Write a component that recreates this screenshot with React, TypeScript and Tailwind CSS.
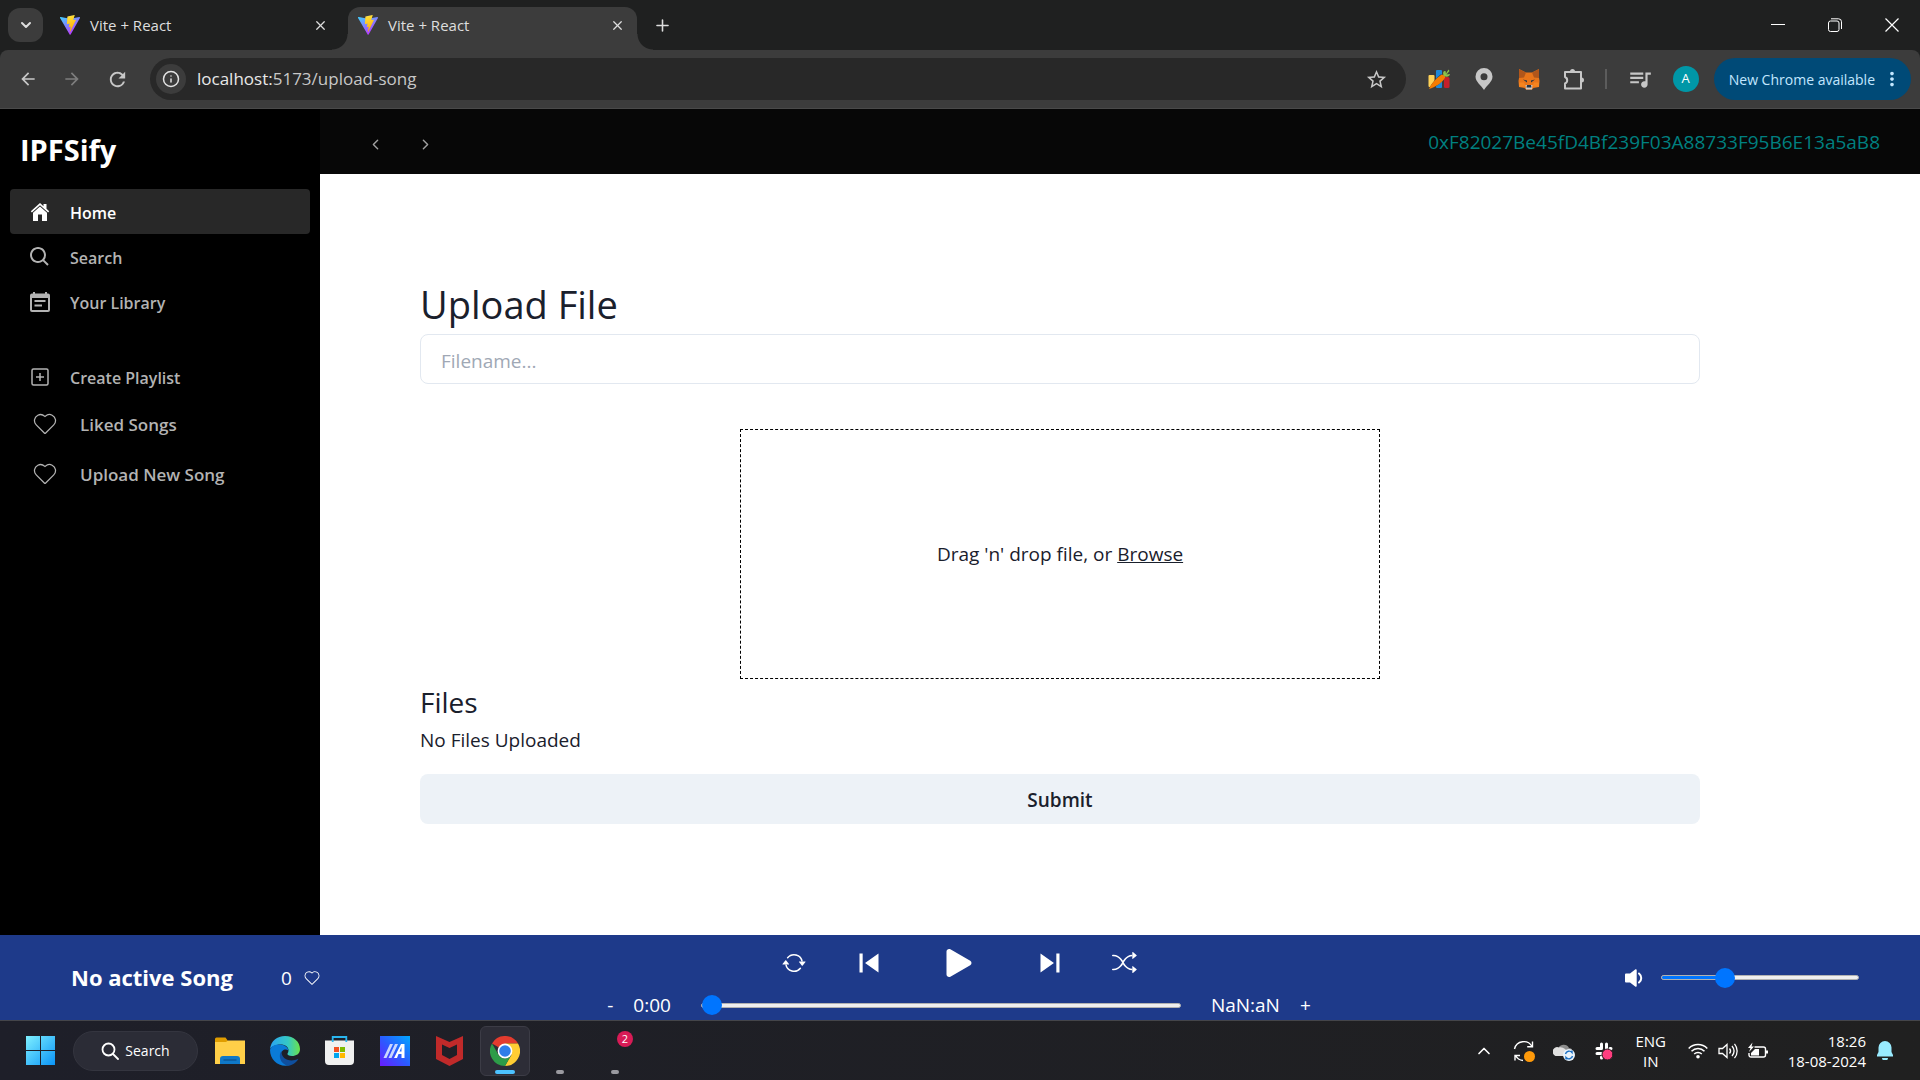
import React, { useState } from "react"
import { BiSearch } from "react-icons/bi"
import { CiHeart } from "react-icons/ci"
import { BsArrowRepeat, BsFillPlayFill, BsShuffle } from "react-icons/bs"
import {
  MdArrowBack,
  MdArrowForward,
  MdMoreVert,
  MdQueueMusic,
  MdRefresh,
  MdSkipNext,
  MdSkipPrevious,
  MdStarBorder,
} from "react-icons/md"
import { ChevronDown, ChevronLeft, ChevronRight, ChevronUp, Info, Plus, X } from "lucide-react"

function ViteLogo() {
  return (
    <svg viewBox="0 0 32 32" className="size-5 shrink-0">
      <defs>
        <linearGradient id="viteA" x1="0" x2="0.6" y1="0" y2="1">
          <stop offset="0" stopColor="#41d1ff" />
          <stop offset="1" stopColor="#bd34fe" />
        </linearGradient>
        <linearGradient id="viteB" x1="0.4" x2="0.6" y1="0" y2="1">
          <stop offset="0" stopColor="#ffea83" />
          <stop offset="0.1" stopColor="#ffdd35" />
          <stop offset="1" stopColor="#ffa800" />
        </linearGradient>
      </defs>
      <path fill="url(#viteA)" d="M31.9 4.6 17 31.3c-.4.6-1.2.6-1.6 0L.1 4.6c-.4-.7.2-1.5 1-1.3l15 2.7h.2l14.6-2.7c.8-.1 1.4.7 1 1.3Z" />
      <path fill="url(#viteB)" d="M23.1 0 12.1 2.2a.4.4 0 0 0-.3.4l-.7 11.5c0 .3.2.5.5.4l3.1-.7c.3-.1.5.2.5.5l-1 4.5c0 .3.2.6.5.5l2-.6c.2-.1.5.2.4.5l-1.5 7.1c-.1.4.5.7.7.3l.2-.3L25.5 8c.2-.3-.1-.7-.5-.6l-3.2.6c-.3.1-.6-.2-.5-.5l2.2-7c.1-.3-.1-.5-.4-.5Z" />
    </svg>
  )
}

function TabStrip() {
  return (
    <div className="flex h-[50px] items-end bg-[#1f2020] text-[#dedede]">
      <div className="flex h-[50px] items-center pl-2">
        <button aria-label="Search tabs" className="flex h-[34px] w-[35px] items-center justify-center rounded-xl bg-[#3c3c3c]">
          <ChevronDown size={16} strokeWidth={3} />
        </button>
      </div>
      <div className="flex h-[50px] w-[305px] items-center gap-2.5 pl-[17px] pr-5">
        <ViteLogo />
        <span className="flex-1 text-[15px]">Vite + React</span>
        <button aria-label="Close tab"><X size={15} strokeWidth={2} /></button>
      </div>
      <div className="relative flex h-[43px] w-[289px] items-center gap-2.5 rounded-t-xl bg-[#3c3c3c] pb-[7px] pl-2.5 pr-3 before:absolute before:bottom-0 before:-left-4 before:size-4 before:bg-[radial-gradient(circle_at_0_0,transparent_15px,#3c3c3c_16px)] after:absolute after:bottom-0 after:-right-4 after:size-4 after:bg-[radial-gradient(circle_at_100%_0,transparent_15px,#3c3c3c_16px)]">
        <ViteLogo />
        <span className="flex-1 text-[15px]">Vite + React</span>
        <button aria-label="Close tab"><X size={15} strokeWidth={2} /></button>
      </div>
      <button aria-label="New tab" className="ml-4 flex h-[50px] items-center"><Plus size={19} strokeWidth={2} /></button>
      <div className="ml-auto flex h-[50px] items-center text-white">
        <button aria-label="Minimize" className="flex w-[57px] justify-center">
          <svg viewBox="0 0 14 14" className="size-3.5"><path d="M0 6.5h14" stroke="currentColor" /></svg>
        </button>
        <button aria-label="Restore" className="flex w-[57px] justify-center">
          <svg viewBox="0 0 14 14" className="size-3.5" fill="none" stroke="currentColor">
            <rect x="0.5" y="3" width="10.5" height="10.5" rx="2" />
            <path d="M3 0.8h7.5a3 3 0 0 1 3 3V11" />
          </svg>
        </button>
        <button aria-label="Close window" className="flex w-[57px] justify-center">
          <svg viewBox="0 0 14 14" className="size-3.5"><path d="m.5.5 13 13m0-13-13 13" stroke="currentColor" strokeWidth="1.2" /></svg>
        </button>
      </div>
    </div>
  )
}

function Toolbar() {
  return (
    <div className="bg-[#1f2020]">
      <div className="flex h-[59px] items-center rounded-t-lg border-b border-[#4a4a4a] bg-[#3c3c3c] pr-[9px] text-[#c7c7c7]">
        <button aria-label="Back" className="ml-[18px]"><MdArrowBack size={20} /></button>
        <button aria-label="Forward" className="ml-6 text-[#7d7d7d]"><MdArrowForward size={20} /></button>
        <button aria-label="Reload" className="ml-6"><MdRefresh size={23} /></button>
        <div className="ml-[21px] flex h-[42px] flex-1 items-center rounded-full bg-[#282828] pl-1.5 pr-[18px]">
          <button aria-label="Site information" className="mr-[11px] flex size-[30px] items-center justify-center rounded-full bg-[#3c3c3c] text-[#e3e3e3]">
            <Info size={18} />
          </button>
          <span className="flex-1 text-[17px]"><span className="text-[#e8e8e8]">localhost:</span>5173/upload-song</span>
          <button aria-label="Bookmark"><MdStarBorder size={23} /></button>
        </div>
        <div className="ml-[22px] flex items-center gap-[23px]">
          <button aria-label="Carrot extension">
            <svg viewBox="0 0 22 22" className="size-[22px]">
              <rect x="0.5" y="7" width="6" height="12" rx="1" fill="#ffd257" />
              <rect x="8" y="2" width="6" height="18" rx="1" fill="#1e88d8" />
              <rect x="16" y="9" width="5.5" height="11" rx="1.5" fill="#c4202b" />
              <path d="M1 21.500c1-4 6-10 11-14.500 2-1.500 6 1 5 3-4 5-10 10-16 11.500Z" fill="#3c3c3c" />
              <path d="M1 21c2-5 6-10 12-14 2-1 5 1 4 3-3 5-10 9-16 11Z" fill="#f57c00" />
              <path d="M15.500 7.500c-1-3 0-5 2-4.500l.5 2.500 2.500-4 1 1.500-3 3.500 3.500-.5c-.5 3-4 3.500-6.500 1.500Z" fill="#8bc34a" />
            </svg>
          </button>
          <button aria-label="Location extension">
            <svg viewBox="0 0 22 22" className="size-[22px]" fill="currentColor">
              <path fillRule="evenodd" d="M11 0a8.500 8.500 0 0 0-8.500 8.500C2.500 14 8 17 11 22c3-5 8.500-8 8.500-13.500A8.500 8.500 0 0 0 11 0Zm0 5.200a3.500 3.500 0 1 1 0 7 3.500 3.500 0 0 1 0-7Z" />
            </svg>
          </button>
          <button aria-label="MetaMask">
            <svg viewBox="0 0 22 22" className="size-[22px]">
              <path d="M1 1l7 3.500h6L21 1v9l.5 3-.5 6-5.500 1-1.500 1.500H8L6.500 20 1 19l-.5-6 .5-3Z" fill="#e8751a" />
              <path d="M1 1l7 3.500-2 5L1 10Zm20 0-7 3.500 2 5 5 .5Z" fill="#b0561b" />
              <path d="M1 14.500h5l2 4-7 .5Zm20 0h-5l-2 4 7 .5Z" fill="#f5841f" />
              <path d="M5 11.500l4 1v2Zm12 0-4 1v2Z" fill="#233447" />
              <path d="M7.500 17h7l-.5 4.500H8Z" fill="#d5c8bd" />
              <path d="M9 17h4l.5 2.500h-5Z" fill="#233447" />
            </svg>
          </button>
          <button aria-label="Extensions">
            <svg viewBox="0 0 22 22" className="size-[22px]" fill="none" stroke="currentColor" strokeWidth="2" strokeLinejoin="round">
              <path d="M2 4h16v16.500H2v-5a3.500 3.500 0 0 0 0-6.500Z" />
              <path d="M7 3.500a2.500 2.500 0 0 1 5 0ZM18.500 9.500a2.500 2.500 0 0 1 0 5Z" fill="currentColor" stroke="none" />
            </svg>
          </button>
        </div>
        <span className="ml-5 h-5 w-0.5 bg-[#5c5c5c]" />
        <button aria-label="Media controls" className="ml-5"><MdQueueMusic size={26} /></button>
        <button aria-label="Profile" className="ml-5 flex size-[26px] items-center justify-center rounded-full bg-[#0097a7] text-[13px] text-white">A</button>
        <button className="ml-[15px] flex h-[42px] items-center whitespace-nowrap rounded-full bg-[#004a77] pl-[15px] pr-2 text-[14px] text-[#c2e7ff]">
          New Chrome available
          <MdMoreVert size={22} className="ml-1.5" />
        </button>
      </div>
    </div>
  )
}

function HomeIcon() {
  return (
    <svg viewBox="0 0 20 20" className="size-5" fill="currentColor">
      <path d="M10 1 .8 9.300l1.100 1.200L10 3.300l8.100 7.200 1.100-1.200L16.500 6.800V2h-3v2.200Z" />
      <path d="M10 4.600 3 10.800V19h5v-6.500h4V19h5v-8.200Z" />
    </svg>
  )
}

function LibraryIcon() {
  return (
    <svg viewBox="0 0 20 20" className="size-5" fill="currentColor">
      <path fillRule="evenodd" d="M3 0h2v1.500h10V0h2v1.500h1a2 2 0 0 1 2 2V18a2 2 0 0 1-2 2H2a2 2 0 0 1-2-2V3.500a2 2 0 0 1 2-2h1ZM2 6v12h16V6Zm2.500 2h11v2h-11Zm0 4.500h7.500v2H4.500Z" />
    </svg>
  )
}

function AddIcon() {
  return (
    <svg viewBox="0 0 20 20" className="size-5" fill="none" stroke="currentColor" strokeWidth="1.5">
      <rect x="2" y="2" width="16" height="16" rx="1.5" />
      <path d="M10 6v8M6 10h8" />
    </svg>
  )
}

function VolumeIcon() {
  return (
    <svg viewBox="0 0 18 18" className="size-[18px]" fill="currentColor">
      <path d="M1 4.500h4L10.500.3c.6-.4 1.200 0 1.200.7v16c0 .7-.6 1.100-1.200.7L5 13.500H1a1 1 0 0 1-1-1v-7a1 1 0 0 1 1-1Z" />
      <path d="M14 4.500c3 2.500 3 6.500 0 9" fill="none" stroke="currentColor" strokeWidth="2" strokeLinecap="round" />
    </svg>
  )
}

const mainLinks = [
  { label: "Home", icon: <HomeIcon />, active: true },
  { label: "Search", icon: <BiSearch size={24} />, active: false },
  { label: "Your Library", icon: <LibraryIcon />, active: false },
]

function Sidebar() {
  return (
    <aside className="w-80 shrink-0 bg-black px-2.5 text-[16px] font-semibold text-[#b3b3b3]">
      <h1 className="flex h-20 items-center px-2.5 pt-0.5 text-[29px] font-bold text-white">IPFSify</h1>
      <nav>
        {mainLinks.map((link) => (
          <a
            key={link.label}
            href="#"
            className={link.active ? "flex h-[45px] items-center gap-[15px] rounded bg-[#282828] pl-[15px] text-white" : "flex h-[45px] items-center gap-[15px] pl-[15px]"}
          >
            <span className="flex w-[30px] justify-center">{link.icon}</span>
            <span className="pt-0.5">{link.label}</span>
          </a>
        ))}
        <a href="#" className="mt-[30px] flex h-[45px] items-center gap-[15px] pl-[15px]">
          <span className="flex w-[30px] justify-center"><AddIcon /></span>
          <span className="pt-0.5">Create Playlist</span>
        </a>
        <a href="#" className="flex h-[50px] items-center gap-5 pl-5 text-[17px]">
          <CiHeart size={30} />
          <span className="pt-0.5">Liked Songs</span>
        </a>
        <a href="#" className="flex h-[50px] items-center gap-5 pl-5 text-[17px]">
          <CiHeart size={30} />
          <span className="pt-0.5">Upload New Song</span>
        </a>
      </nav>
    </aside>
  )
}

function UploadPage() {
  return (
    <main className="flex min-w-0 flex-1 flex-col bg-white text-[#1a202c]">
      <header className="flex h-[65px] items-center justify-between bg-[#070707] pl-[45px] pr-10 pt-1.5">
        <div className="flex gap-[30px] text-[#a0a0a0]">
          <button aria-label="Go back" className="flex w-5 justify-center"><ChevronLeft size={17} /></button>
          <button aria-label="Go forward" className="flex w-5 justify-center"><ChevronRight size={17} /></button>
        </div>
        <span className="pb-1 text-[19px] text-[#008080]">0xF82027Be45fD4Bf239F03A88733F95B6E13a5aB8</span>
      </header>
      <form className="ml-[100px] flex w-4/5 flex-1 flex-col pt-[100px]" onSubmit={(e) => e.preventDefault()}>
        <h2 className="text-[38px] leading-[60px]">
          <label htmlFor="filename">Upload File</label>
        </h2>
        <input
          id="filename"
          placeholder="Filename..."
          className="h-[50px] rounded-lg border border-[#e2e8f0] px-5 pt-1 text-[19px] outline-none placeholder:text-[#a0a8b5]"
        />
        <div className="mx-auto mt-[45px] flex h-[250px] w-1/2 items-center justify-center border border-dashed border-black text-[19px]">
          <p>Drag 'n' drop file, or <button type="button" className="underline">Browse</button></p>
        </div>
        <h3 className="text-[28px] leading-[46px]">Files</h3>
        <p className="text-[19px] leading-[30px]">No Files Uploaded</p>
        <button type="submit" className="mt-[19px] h-[50px] rounded-lg bg-[#edf2f7] pt-0.5 text-[19px] font-semibold">Submit</button>
      </form>
    </main>
  )
}

function Slider({ label, value, onChange }: { label: string; value: number; onChange: (v: number) => void }) {
  return (
    <input
      type="range"
      aria-label={label}
      value={value}
      onChange={(e) => onChange(Number(e.target.value))}
      style={{ backgroundImage: `linear-gradient(to right, #0075ff ${value}%, transparent ${value}%)` }}
      className="h-[5px] w-full appearance-none rounded-full border border-[#b2b2b2] bg-[#efefef] [&::-webkit-slider-thumb]:size-5 [&::-webkit-slider-thumb]:appearance-none [&::-webkit-slider-thumb]:rounded-full [&::-webkit-slider-thumb]:bg-[#0075ff]"
    />
  )
}

function Player() {
  const [position, setPosition] = useState(0)
  const [volume, setVolume] = useState(30)

  return (
    <footer className="flex h-[85px] bg-[#1e3a8a] text-white">
      <div className="flex flex-1 items-center pl-[71px]">
        <h2 className="text-[22px] font-bold">No active Song</h2>
        <span className="ml-12 pt-0.5 text-[19px]">0</span>
        <button aria-label="Like" className="ml-2.5"><CiHeart size={20} /></button>
      </div>
      <div className="flex flex-col items-center pr-3">
        <div className="flex h-14 items-center">
          <button aria-label="Repeat" className="flex w-[75px] justify-center"><BsArrowRepeat size={24} /></button>
          <button aria-label="Previous" className="flex w-[75px] justify-center"><MdSkipPrevious size={38} /></button>
          <button aria-label="Play" className="flex w-[106px] justify-center"><BsFillPlayFill size={50} /></button>
          <button aria-label="Next" className="flex w-[75px] justify-center"><MdSkipNext size={38} /></button>
          <button aria-label="Shuffle" className="flex w-[75px] justify-center"><BsShuffle size={25} /></button>
        </div>
        <div className="flex h-[30px] items-center text-[19px]">
          <button aria-label="Rewind">-</button>
          <span className="ml-5">0:00</span>
          <div className="ml-[30px] flex w-[480px]"><Slider label="Seek" value={position} onChange={setPosition} /></div>
          <span className="ml-[30px]">NaN:aN</span>
          <button aria-label="Skip ahead" className="ml-5">+</button>
        </div>
      </div>
      <div className="flex flex-1 items-center justify-end gap-[18px] pr-[61px]">
        <VolumeIcon />
        <div className="flex w-[198px]"><Slider label="Volume" value={volume} onChange={setVolume} /></div>
      </div>
    </footer>
  )
}

function AppIcons() {
  return (
    <>
      <button aria-label="File Explorer" className="flex w-[55px] items-center justify-center">
        <svg viewBox="0 0 30 28" className="h-7 w-[30px]">
          <path d="M0 2a1.500 1.500 0 0 1 1.500-1.500h9L13 4v6H0Z" fill="#e09d00" />
          <path d="M0 5h11l2-1.500h17V27H0Z" fill="#ffcf48" />
          <path d="M5 27v-5a3 3 0 0 1 3-3h14a3 3 0 0 1 3 3v5Z" fill="#0f78c8" />
          <path d="M8.500 23h13" stroke="#0b4f8c" strokeWidth="1.2" />
        </svg>
      </button>
      <button aria-label="Edge" className="flex w-[55px] items-center justify-center">
        <svg viewBox="0 0 30 30" className="size-[30px]">
          <defs>
            <linearGradient id="edgeTop" x1="0" x2="1"><stop stopColor="#2aa4f4" /><stop offset="0.6" stopColor="#35c8c4" /><stop offset="1" stopColor="#6be24a" /></linearGradient>
          </defs>
          <path d="M0 13C1 5 7 0 15 0c9 0 15 6 15 13 0 5-4 7-8 7-3 0-5-1-4.500-2.500C20 14 18 9 12 8.500 6 8 1 11 0 13Z" fill="url(#edgeTop)" />
          <path d="M0 14C1 10 5 8.500 9 8.500c6 0 9 3 9.500 6C15 12 10 15 11 20c1 5 6 8 9 9C10 32 0 25 0 14Z" fill="#0a7bd8" />
          <path d="M11.500 15C8 19 10 28 18 29.800c5-.5 8-3 10.500-7C20 27 11 23 11.500 15Z" fill="#0f4f9e" />
        </svg>
      </button>
      <button aria-label="Microsoft Store" className="flex w-[55px] items-center justify-center">
        <svg viewBox="0 0 29 29" className="size-[29px]">
          <path d="M0 4.500h29V25a4 4 0 0 1-4 4H4a4 4 0 0 1-4-4Z" fill="#f0f0f0" />
          <path d="M7.700 6V1h13.600v5" fill="none" stroke="#29b6f0" strokeWidth="1.800" />
          <path d="M9 11h5v5H9Z" fill="#f25022" /><path d="M15 11h5v5h-5Z" fill="#7fba00" />
          <path d="M9 17h5v5H9Z" fill="#00a4ef" /><path d="M15 17h5v5h-5Z" fill="#ffb900" />
        </svg>
      </button>
      <button aria-label="MyASUS" className="flex w-[55px] items-center justify-center">
        <svg viewBox="0 0 30 30" className="size-[30px]">
          <defs><linearGradient id="asus" x1="0" x2="1" y1="1" y2="0"><stop stopColor="#6a1bff" /><stop offset="0.5" stopColor="#2a5cff" /><stop offset="1" stopColor="#00a8ff" /></linearGradient></defs>
          <path d="M0 0h30v30H0Z" fill="url(#asus)" />
          <path d="M3.500 22 10 8h3L6.500 22Zm5 0L15 8h3l-6.500 14Z" fill="#c9d6ff" />
          <path d="M14 22 21 8h3.500v14h-3v-4h-3l-1.500 4Zm5.500-6.500h2V11Z" fill="#fff" />
        </svg>
      </button>
      <button aria-label="McAfee" className="flex w-[55px] items-center justify-center">
        <svg viewBox="0 0 27 30" className="h-[30px] w-[27px]">
          <path fillRule="evenodd" d="M0 0l13.500 6L27 0v23l-13.500 7L0 23Zm6 8.500V19l7.500 4 7.500-4V8.500L13.500 12Z" fill="#c02a2a" />
        </svg>
      </button>
      <div className="flex w-[55px] items-center justify-center">
        <button aria-label="Chrome" className="relative flex h-[50px] w-[50px] items-center justify-center rounded-md border border-[#3c3c46] bg-[#2d2d37] after:absolute after:bottom-px after:left-3.5 after:h-1 after:w-5 after:rounded-full after:bg-[#4cc2ff]">
          <svg viewBox="0 0 30 30" className="size-[30px]">
            <path d="M15 15 2 7.500A15 15 0 0 1 28 7.500H15Z" fill="#e33b2e" />
            <path d="M15 7.500h13A15 15 0 0 1 15 30l6.500-11.300Z" fill="#ffcd33" />
            <path d="M2 7.500 8.500 18.700a7.500 7.500 0 0 0 13 0L15 30A15 15 0 0 1 2 7.500Z" fill="#2d9c48" />
            <circle cx="15" cy="15" r="7.400" fill="#fff" />
            <circle cx="15" cy="15" r="5.800" fill="#2f7de9" />
          </svg>
        </button>
      </div>
      <div className="flex w-[55px] items-end justify-center pb-1.5"><span className="h-1 w-2 rounded-full bg-[#9a9aa0]" /></div>
      <div className="relative flex w-[55px] items-end justify-center pb-1.5">
        <span className="h-1 w-2 rounded-full bg-[#9a9aa0]" />
        <span className="absolute left-[30px] top-2.5 flex size-4 items-center justify-center rounded-full bg-[#d81b56] text-[11px] text-white">2</span>
      </div>
    </>
  )
}

function Taskbar() {
  return (
    <div className="flex h-[60px] border-t border-[#44454a] bg-linear-to-r from-[#1e1f29] to-[#202020] text-white">
      <div className="flex items-stretch pl-[13px]">
        <button aria-label="Start" className="flex w-[55px] items-center justify-center">
          <svg viewBox="0 0 29 29" className="size-[29px]">
            <defs><linearGradient id="win" x1="0" x2="1" y1="0" y2="1"><stop stopColor="#7ff0ff" /><stop offset="1" stopColor="#0a94f7" /></linearGradient></defs>
            <path d="M0 0h14v14H0ZM15 0h14v14H15ZM0 15h14v14H0ZM15 15h14v14H15Z" fill="url(#win)" />
          </svg>
        </button>
        <button className="ml-[5px] mr-1 my-auto flex h-10 w-[125px] items-center justify-center gap-1.5 rounded-full border border-[#34353f] bg-[#2b2c36] text-[14px]">
          <svg viewBox="0 0 18 18" className="size-[18px]" fill="none" stroke="currentColor" strokeWidth="1.8"><circle cx="7.500" cy="7.500" r="6" /><path d="m12 12 5 5" strokeLinecap="round" /></svg>
          Search
        </button>
        <AppIcons />
      </div>
      <div className="ml-auto flex items-center pr-[27px]">
        <button aria-label="Show hidden icons" className="flex w-10 justify-center"><ChevronUp size={20} /></button>
        <button aria-label="Updates" className="flex w-10 justify-center">
          <svg viewBox="0 0 22 22" className="size-[22px]" fill="none" stroke="currentColor" strokeWidth="1.4">
            <path d="M1.500 9A9.500 9.500 0 0 1 19 6.500M19.500 1.500v5.300h-5.300M2 20.500v-5h5M2.500 15.500A9.500 9.500 0 0 0 10 20.500" />
            <circle cx="16.500" cy="16.500" r="5.500" fill="#ff9a0a" stroke="none" />
          </svg>
        </button>
        <button aria-label="OneDrive" className="flex w-10 justify-center">
          <svg viewBox="0 0 22 20" className="h-5 w-[22px]">
            <path d="M5 8a6 6 0 0 1 11-1c3 0 4 3 4 6H8Z" fill="#8d8d8d" />
            <path d="M5 15a4.500 4.500 0 1 1 1-8.500c4-1 7 2 10 6v2.500Z" fill="#e0e0e0" />
            <circle cx="16" cy="14" r="6" fill="#e9f3fb" />
            <path d="M12.500 13a3.700 3.700 0 0 1 6.500-1.500V9.500M19.500 15a3.700 3.700 0 0 1-6.500 1.500v2" fill="none" stroke="#1a6fc4" strokeWidth="1.4" />
          </svg>
        </button>
        <button aria-label="Slack" className="flex w-10 justify-center">
          <svg viewBox="0 0 18 18" className="size-[18px]" stroke="#fff" strokeWidth="3" strokeLinecap="round">
            <path d="M6.500 2v4.500M2 6.500h4.500M11.500 2v4.500M16 6.500h-1M2 11.500h4.500M6.500 16v-1" />
            <circle cx="12.500" cy="12.500" r="5.500" fill="#ff3d7f" stroke="#181818" strokeWidth="1" />
          </svg>
        </button>
        <button className="w-[54px] text-center text-[15px] leading-5">ENG<br />IN</button>
        <button aria-label="Network, sound and battery" className="ml-2.5 flex items-center gap-2.5">
          <svg viewBox="0 0 20 16" className="h-4 w-5" fill="none" stroke="currentColor" strokeWidth="1.5">
            <path d="M.7 5.500a13 13 0 0 1 18.600 0M3.500 8.300a9 9 0 0 1 13 0M6.200 11a5.500 5.500 0 0 1 7.600 0" />
            <circle cx="10" cy="13.700" r="1.800" fill="currentColor" stroke="none" />
          </svg>
          <svg viewBox="0 0 20 18" className="h-[18px] w-5" fill="none" stroke="currentColor" strokeWidth="1.3">
            <path d="M1 6.500h3.500L9 2.500v13L4.500 11.500H1ZM11.500 6.500c1.300 1.500 1.300 3.500 0 5M14 4c2.500 3 2.500 7 0 10M16.500 1.800c3.500 4.200 3.500 10.200 0 14.400" />
          </svg>
          <svg viewBox="0 0 20 18" className="h-[18px] w-5" fill="none" stroke="currentColor" strokeWidth="1.4">
            <path d="M6.500 5h9a2 2 0 0 1 2 2v6a2 2 0 0 1-2 2H3a2 2 0 0 1-2-2v-2" />
            <path d="M19 8.500v3" strokeWidth="2" />
            <path d="M7 7h4v6.500H3V11ZM4.500.5 0 6h2.500L1 10l5-5.500H3.500Z" fill="currentColor" stroke="none" />
          </svg>
        </button>
        <button className="ml-5 flex items-center gap-[11px] text-right text-[15px] leading-5">
          <span>18:26<br />18-08-2024</span>
          <svg viewBox="0 0 16 19" className="h-[19px] w-4" fill="#99ebff">
            <path d="M8 0a6.500 6.500 0 0 0-6.500 6.500V11L0 14v1.500h16V14l-1.500-3V6.500A6.500 6.500 0 0 0 8 0ZM5 17h6a3 2.500 0 0 1-6 0Z" />
          </svg>
        </button>
      </div>
    </div>
  )
}

export default function App() {
  return (
    <div className="flex min-h-screen flex-col font-['Open_Sans','Noto_Sans',sans-serif]">
      <TabStrip />
      <Toolbar />
      <div className="flex flex-1">
        <Sidebar />
        <UploadPage />
      </div>
      <Player />
      <Taskbar />
    </div>
  )
}
